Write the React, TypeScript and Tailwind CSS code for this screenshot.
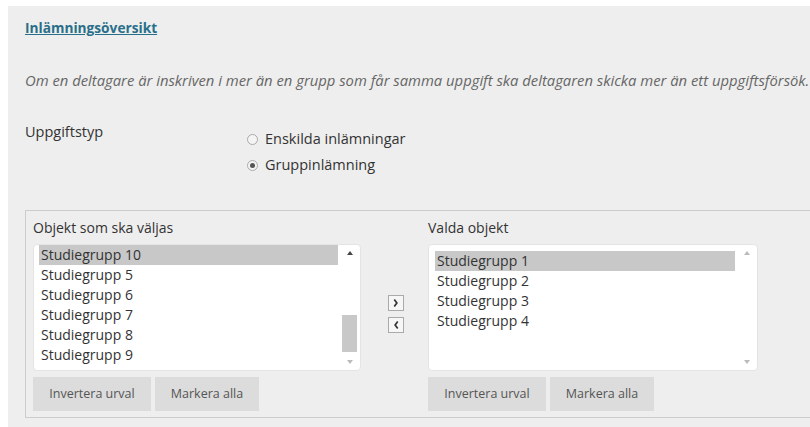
import React from "react";

const Btn = ({ children, w }: { children: React.ReactNode; w: string }) => (
  <div className={`h-[34px] ${w} bg-[#dcdcdc] flex items-center justify-center text-[12.5px] text-[#555]`}>{children}</div>
);

const List = ({ items, thumb }: { items: string[]; thumb: boolean }) => (
  <div className="relative h-[127px] bg-white border border-[#e4e4e4] rounded-sm">
    <div className="absolute right-[3px] top-[4px] bottom-[4px] w-[15px]">
      <div className="absolute top-[2px] left-[5px] w-0 h-0 border-l-[3px] border-r-[3px] border-b-[4px] border-l-transparent border-r-transparent border-b-[#444]" style={thumb ? {} : { borderBottomColor: "#bbb" }} />
      {thumb && <div className="absolute left-0 right-0 top-[66px] h-[37px] bg-[#c8c8c8]" />}
      <div className="absolute bottom-[2px] left-[5px] w-0 h-0 border-l-[3px] border-r-[3px] border-t-[4px] border-l-transparent border-r-transparent border-t-[#bbb]" />
    </div>
    <div className={thumb ? "pt-[0px] pl-[5px] pr-[22px]" : "pt-[6px] pl-[6px] pr-[22px]"}>
      {items.map((t, i) => (
        <div key={t} className={`h-[20px] leading-[20px] text-[14px] text-[#333] pl-[2px] ${i === 0 ? "bg-[#c8c8c8]" : ""}`}>{t}</div>
      ))}
    </div>
  </div>
);

export default function App() {
  return (
    <div className="w-[810px] h-[427px] bg-white pt-[6px] pl-[8px] overflow-hidden" style={{ fontFamily: '"Open Sans", sans-serif' }}>
      <div className="bg-[#eeeeee] h-[421px] pl-[17px] pt-[13px]">
        <div className="text-[13.7px] font-bold text-[#2a6f8a] underline leading-[18px]">Inlämningsöversikt</div>
        <div className="mt-[33px] text-[14.8px] italic text-[#666] whitespace-nowrap leading-[20px]">Om en deltagare är inskriven i mer än en grupp som får samma uppgift ska deltagaren skicka mer än ett uppgiftsförsök.</div>
        <div className="mt-[31px] flex text-[14.5px] text-[#333]">
          <div className="w-[222px]">Uppgiftstyp</div>
          <div className="pt-[8px] flex flex-col gap-[6px]">
            <div className="flex items-center gap-[7px] leading-[20px]">
              <span className="w-[11px] h-[11px] rounded-full border border-[#aaa] bg-[#f4f4f4]" />Enskilda inlämningar
            </div>
            <div className="flex items-center gap-[7px] leading-[20px]">
              <span className="w-[11px] h-[11px] rounded-full border border-[#aaa] bg-[#f4f4f4] flex items-center justify-center"><span className="w-[5px] h-[5px] rounded-full bg-[#555]" /></span>Gruppinlämning
            </div>
          </div>
        </div>
        <div className="mt-[35px] border border-[#cccccc] border-r-0 h-[208px] pl-[7px] pt-[7px] flex">
          <div className="w-[328px]">
            <div className="text-[14px] text-[#333] leading-[20px] h-[26px]">Objekt som ska väljas</div>
            <List thumb items={["Studiegrupp 10", "Studiegrupp 5", "Studiegrupp 6", "Studiegrupp 7", "Studiegrupp 8", "Studiegrupp 9"]} />
            <div className="mt-[6px] flex gap-[4px]"><Btn w="w-[118px]">Invertera urval</Btn><Btn w="w-[104px]">Markera alla</Btn></div>
          </div>
          <div className="w-[67px] flex flex-col items-center pt-[77px] gap-[6px] pl-[2px]">
            {["M5 3l3 4-3 4", "M9 3L6 7l3 4"].map((d) => (
              <div key={d} className="w-[16px] h-[16px] border border-[#aaa] bg-[#f6f6f6] flex items-center justify-center">
                <svg width="12" height="12" viewBox="0 0 14 14"><path d={d} stroke="#333" strokeWidth="2" fill="none" /></svg>
              </div>
            ))}
          </div>
          <div className="w-[330px]">
            <div className="text-[14px] text-[#333] leading-[20px] h-[26px]">Valda objekt</div>
            <List thumb={false} items={["Studiegrupp 1", "Studiegrupp 2", "Studiegrupp 3", "Studiegrupp 4"]} />
            <div className="mt-[6px] flex gap-[4px]"><Btn w="w-[118px]">Invertera urval</Btn><Btn w="w-[104px]">Markera alla</Btn></div>
          </div>
        </div>
      </div>
    </div>
  );
}
